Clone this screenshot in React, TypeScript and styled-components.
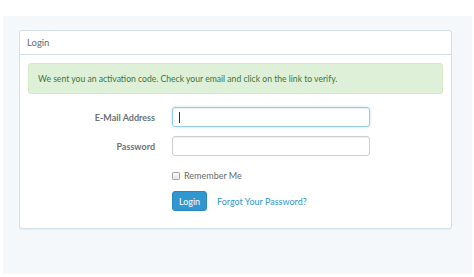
import styled, { createGlobalStyle } from "styled-components";

const GlobalStyle = createGlobalStyle`
  html, body {
    margin: 0;
    padding: 0;
    background: #ffffff;
  }
  body {
    font-family: Lato, "Open Sans", sans-serif;
    color: #636b6f;
  }
`;

const Page = styled.div`
  width: 474px;
  height: 277px;
  padding: 16px 2px 3px 3px;
  box-sizing: border-box;
`;

const Backdrop = styled.div`
  background: #f5f8fa;
  height: 258px;
  padding: 14px 20px 0 16px;
  box-sizing: border-box;
`;

const Panel = styled.div`
  background: #ffffff;
  border: 1px solid #d3e0e9;
  border-radius: 3px;
  box-shadow: 0 1px 1px rgba(0, 0, 0, 0.05);
`;

const PanelHeading = styled.div`
  height: 23px;
  display: flex;
  align-items: center;
  padding: 0 7px;
  font-size: 9.5px;
  border-bottom: 1px solid #d3e0e9;
`;

const PanelBody = styled.div`
  padding: 8px 8px 17px 8px;
`;

const Alert = styled.div`
  height: 31px;
  box-sizing: border-box;
  display: flex;
  align-items: center;
  padding: 0 9px;
  background: #dff0d8;
  border: 1px solid #d6e9c6;
  border-radius: 3px;
  color: #3c763d;
  font-size: 8.6px;
  margin-bottom: 13px;
`;

const Form = styled.form`
  display: grid;
  grid-template-columns: 127px 198px;
  column-gap: 17px;
  row-gap: 9px;
  align-items: center;
`;

const Label = styled.label`
  text-align: right;
  font-size: 9px;
  font-weight: 700;
  color: #6b7377;
`;

const Input = styled.input`
  height: 20px;
  box-sizing: border-box;
  border: 1px solid #ccd0d2;
  border-radius: 3px;
  box-shadow: inset 0 1px 1px rgba(0, 0, 0, 0.075);
  padding: 0 7px;
  font-size: 9px;
  font-family: inherit;
  outline: none;
  color: #555;
`;

const FocusedInput = styled.span`
  display: flex;
  align-items: center;
  height: 20px;
  box-sizing: border-box;
  border: 1px solid #98cbe8;
  border-radius: 3px;
  box-shadow: inset 0 1px 1px rgba(0, 0, 0, 0.075),
    0 0 3px rgba(152, 203, 232, 0.6);
  padding: 0 6px;
  &::before {
    content: "";
    width: 1px;
    height: 11px;
    background: #333;
  }
`;

const Spacer = styled.div``;

const CheckRow = styled.div`
  display: flex;
  align-items: center;
  gap: 4px;
  font-size: 9px;
  height: 17px;
  padding-top: 4px;
  box-sizing: border-box;
`;

const Box = styled.span`
  width: 6px;
  height: 6px;
  border: 1px solid #a9a9a9;
  border-radius: 1px;
  background: linear-gradient(#fafafa, #e6e6e6);
`;

const Actions = styled.div`
  display: flex;
  align-items: center;
  gap: 10px;
`;

const Button = styled.button`
  height: 20px;
  width: 35px;
  padding: 0;
  box-sizing: border-box;
  background: #3097d1;
  border: 1px solid #2a88bd;
  border-radius: 3px;
  color: #ffffff;
  font-family: inherit;
  font-size: 9px;
`;

const Link = styled.a`
  color: #3097d1;
  font-size: 9px;
  text-decoration: none;
`;

export default function App() {
  return (
    <>
      <GlobalStyle />
      <Page>
        <Backdrop>
          <Panel>
            <PanelHeading>Login</PanelHeading>
            <PanelBody>
              <Alert>
                We sent you an activation code. Check your email and click on
                the link to verify.
              </Alert>
              <Form>
                <Label>E-Mail Address</Label>
                <FocusedInput />
                <Label>Password</Label>
                <Input type="password" />
                <Spacer />
                <CheckRow>
                  <Box />
                  Remember Me
                </CheckRow>
                <Spacer />
                <Actions>
                  <Button type="button">Login</Button>
                  <Link href="#">Forgot Your Password?</Link>
                </Actions>
              </Form>
            </PanelBody>
          </Panel>
        </Backdrop>
      </Page>
    </>
  );
}
